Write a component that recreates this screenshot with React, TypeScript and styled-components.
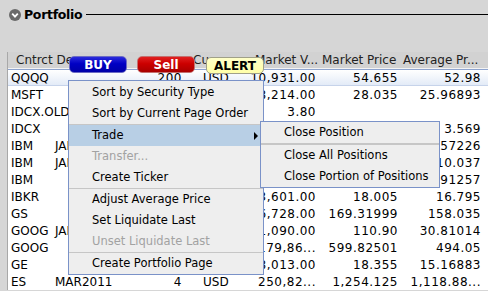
import React from "react";
import styled, { createGlobalStyle } from "styled-components";

const Global = createGlobalStyle`
  html, body {
    margin: 0;
    padding: 0;
    background: #d6d6d6;
    font-family: "DejaVu Sans", Verdana, sans-serif;
    overflow: hidden;
  }
`;

const Page = styled.div`
  position: relative;
  width: 488px;
  height: 291px;
  overflow: hidden;
  background: #d6d6d6;
`;

const TitleBar = styled.div`
  display: flex;
  align-items: center;
  height: 29px;
  padding-left: 9px;
`;

const Toggle = styled.span`
  width: 12px;
  height: 12px;
  border-radius: 50%;
  background: #6a6a6a;
  display: flex;
  align-items: center;
  justify-content: center;
  margin-right: 3px;
  svg {
    width: 8px;
    height: 8px;
  }
`;

const Title = styled.span`
  font-weight: bold;
  font-size: 12.5px;
  letter-spacing: -0.3px;
  color: #000;
`;

const Rule = styled.div`
  flex: 1;
  height: 1px;
  background: #000;
  margin-left: 4px;
`;

const Table = styled.div`
  margin-top: 23px;
  margin-left: 7px;
  border-left: 1px solid #a8a8a8;
  background: #fff;
  font-size: 12px;
  color: #000;
`;

const cols = "44px 94px 44px 50px 80px 81px 87px";

const HeaderRow = styled.div`
  display: grid;
  grid-template-columns: ${cols};
  height: 16px;
  background: #d2d2d2;
  border-bottom: 1px solid #f4f4f4;
  align-items: center;
`;

const Head = styled.div<{ $span?: number; $pad?: number }>`
  grid-column: span ${(p) => p.$span ?? 1};
  padding-left: ${(p) => p.$pad ?? 3}px;
  white-space: nowrap;
  overflow: hidden;
  color: #222;
`;

const Row = styled.div<{ $sel?: boolean }>`
  display: grid;
  grid-template-columns: ${cols};
  height: 17px;
  align-items: center;
  box-sizing: border-box;
  ${(p) =>
    p.$sel
      ? `background: linear-gradient(#ffffff, #e3ebf7);
         border-top: 1px solid #8ea4cf;
         border-bottom: 1px solid #c6d3ea;`
      : ""}
`;

const Cell = styled.div<{ $right?: boolean; $pad?: number }>`
  white-space: nowrap;
  min-width: 0;
  overflow: ${(p) => (p.$right ? "hidden" : "visible")};
  text-align: ${(p) => (p.$right ? "right" : "left")};
  letter-spacing: ${(p) => (p.$right ? "0.5px" : "0")};
  ${(p) => (p.$right ? "padding-right" : "padding-left")}: ${(p) => p.$pad ?? 3}px;
`;

const Btn = styled.div<{ $kind: "buy" | "sell" | "alert"; $x: number; $y: number }>`
  position: absolute;
  left: ${(p) => p.$x}px;
  top: ${(p) => p.$y}px;
  width: 58px;
  height: 17px;
  box-sizing: border-box;
  border-radius: 5px;
  display: flex;
  align-items: center;
  justify-content: center;
  font-weight: bold;
  font-size: 12px;
  font-family: "DejaVu Sans", Verdana, sans-serif;
  ${(p) =>
    p.$kind === "buy"
      ? `background: linear-gradient(#2b2bdc, #0000c4 45%, #0000a8);
         border: 1px solid #6b6bc4; color: #fff;`
      : p.$kind === "sell"
      ? `background: linear-gradient(#e02020, #cc0000 45%, #a80000);
         border: 1px solid #c47070; color: #fff;`
      : `background: linear-gradient(#ffffc8, #ffffa8);
         border: 1px solid #a0a088; color: #000;`}
`;

const Menu = styled.div`
  position: absolute;
  left: 68px;
  top: 80px;
  width: 196px;
  box-sizing: border-box;
  background: #eeeeee;
  border: 1px solid #7a92c8;
  padding: 1px 0 0;
  font-size: 11.5px;
`;

const Item = styled.div<{ $off?: boolean; $hot?: boolean }>`
  position: relative;
  height: 21px;
  line-height: 21px;
  padding-left: 23px;
  white-space: nowrap;
  color: ${(p) => (p.$off ? "#a2a2a2" : "#000")};
  background: ${(p) => (p.$hot ? "#b8cfe5" : "transparent")};
`;

const Sep = styled.div<{ $h?: number }>`
  height: ${(p) => p.$h ?? 1}px;
  background: #c6c6c6;
`;

const Arrow = styled.span`
  position: absolute;
  right: 5px;
  top: 7px;
  width: 0;
  height: 0;
  border-top: 4px solid transparent;
  border-bottom: 4px solid transparent;
  border-left: 4px solid #000;
`;

const SubMenu = styled(Menu)`
  left: 260px;
  top: 121px;
  width: 180px;
  padding: 0;
`;

type R = { sym: string; exp?: string; pos?: string; cur?: string; mv?: string; mp?: string; ap?: string; sel?: boolean };

const rows: R[] = [
  { sym: "QQQQ", pos: "200", cur: "USD", mv: "10,931.00", mp: "54.655", ap: "52.98", sel: true },
  { sym: "MSFT", pos: "300", cur: "USD", mv: "8,214.00", mp: "28.035", ap: "25.96893" },
  { sym: "IDCX.OLD", cur: "USD", mv: "3.80" },
  { sym: "IDCX", pos: "100", cur: "USD", mv: "380.00", mp: "3.80", ap: "3.569" },
  { sym: "IBM", exp: "JAN", pos: "1", cur: "USD", mv: "510.00", mp: "5.10", ap: "4.57226" },
  { sym: "IBM", exp: "JAN", pos: "-1", cur: "USD", mv: "-90.00", mp: "0.90", ap: "10.037" },
  { sym: "IBM", pos: "100", cur: "USD", mv: "16,200.00", mp: "162.00", ap: "123.91257" },
  { sym: "IBKR", pos: "200", cur: "USD", mv: "3,601.00", mp: "18.005", ap: "16.795" },
  { sym: "GS", pos: "100", cur: "USD", mv: "16,728.00", mp: "169.31999", ap: "158.035" },
  { sym: "GOOG", exp: "JAN", pos: "1", cur: "USD", mv: "11,090.00", mp: "110.90", ap: "30.81014" },
  { sym: "GOOG", pos: "300", cur: "USD", mv: "179,86...", mp: "599.82501", ap: "494.05" },
  { sym: "GE", pos: "1000", cur: "USD", mv: "18,013.00", mp: "18.355", ap: "15.16883" },
  { sym: "ES", exp: "MAR2011", pos: "4", cur: "USD", mv: "250,82...", mp: "1,254.125", ap: "1,118.88..." },
];

export default function App() {
  return (
    <Page>
      <Global />
      <TitleBar>
        <Toggle>
          <svg viewBox="0 0 8 8">
            <path d="M1.2 2.6 L4 5.6 L6.8 2.6" fill="none" stroke="#fff" strokeWidth={1.8} />
          </svg>
        </Toggle>
        <Title>Portfolio</Title>
        <Rule />
      </TitleBar>

      <Table>
        <HeaderRow>
          <Head $span={2} $pad={8}>Cntrct Desc</Head>
          <Head $pad={2}></Head>
          <Head $pad={3}>Cu...</Head>
          <Head $pad={15}>Market V...</Head>
          <Head $pad={2}>Market Price</Head>
          <Head $pad={2}>Average Pr...</Head>
        </HeaderRow>
        {rows.map((r, i) => (
          <Row key={i} $sel={r.sel}>
            <Cell>{r.sym}</Cell>
            <Cell>{r.exp}</Cell>
            <Cell $right $pad={8}>{r.pos}</Cell>
            <Cell $pad={13}>{r.cur}</Cell>
            <Cell $right $pad={4}>{r.mv}</Cell>
            <Cell $right $pad={3}>{r.mp}</Cell>
            <Cell $right $pad={7}>{r.ap}</Cell>
          </Row>
        ))}
      </Table>

      <Btn $kind="buy" $x={69} $y={56}>BUY</Btn>
      <Btn $kind="sell" $x={137} $y={56}>Sell</Btn>
      <Btn $kind="alert" $x={206} $y={57}>ALERT</Btn>

      <Menu>
        <Item>Sort by Security Type</Item>
        <Item>Sort by Current Page Order</Item>
        <Sep />
        <Item $hot>
          Trade
          <Arrow />
        </Item>
        <Item $off>Transfer...</Item>
        <Item>Create Ticker</Item>
        <Sep />
        <Item>Adjust Average Price</Item>
        <Item>Set Liquidate Last</Item>
        <Item $off>Unset Liquidate Last</Item>
        <Sep />
        <Item>Create Portfolio Page</Item>
      </Menu>

      <SubMenu>
        <Item>Close Position</Item>
        <Sep $h={2} />
        <Item>Close All Positions</Item>
        <Item>Close Portion of Positions</Item>
      </SubMenu>
    </Page>
  );
}
